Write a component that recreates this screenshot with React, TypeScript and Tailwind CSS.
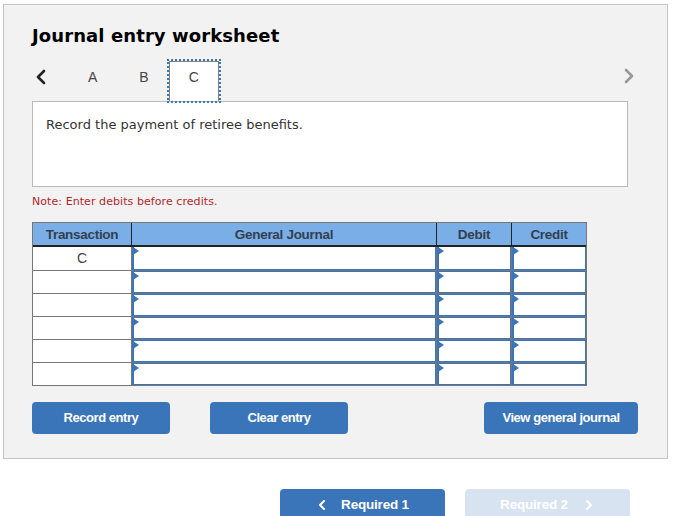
import { ChevronLeft, ChevronRight } from 'lucide-react';

const sans = 'font-["DejaVu_Sans",sans-serif]';
const arial = 'font-["Liberation_Sans",Arial,sans-serif]';

function InputCell({ index, last }: { index: number; last?: boolean }) {
  return (
    <div className={`h-[23px] border-[#777] ${index > 0 ? 'border-t' : ''} ${last ? '' : 'border-r'}`}>
      <div className={`relative h-full bg-white border-b border-r border-l-2 border-[#3a75b9] ${index > 0 ? 'border-t' : ''}`}>
        <span className="absolute -left-[1px] top-0 border-y-[4px] border-l-[6px] border-y-transparent border-l-[#3a75b9]" />
      </div>
    </div>
  );
}

function Row({ label, index }: { label?: string; index: number }) {
  return (
    <>
      <div className={`h-[23px] bg-white pt-[1px] text-center text-[14px] leading-[21px] text-[#444] border-r border-[#777] ${index > 0 ? 'border-t' : ''}`}>
        {label}
      </div>
      <InputCell index={index} />
      <InputCell index={index} />
      <InputCell index={index} last />
    </>
  );
}

function ActionButton({ label, width }: { label: string; width: string }) {
  return (
    <button className={`${width} h-8 rounded-sm bg-[#3a75b9] text-[13px] font-bold tracking-[-0.45px] text-white`}>
      {label}
    </button>
  );
}

export default function App() {
  const rows = ['C', '', '', '', '', ''];
  return (
    <div className={`h-[516px] w-[690px] overflow-hidden bg-white pt-1 pl-[3px] ${arial}`}>
      <div className="h-[455px] w-[665px] border border-[#c4c4c4] bg-[#f2f2f2] pl-[28px] pt-[19px]">
        <h1 className={`${sans} text-[18px] font-bold leading-6 tracking-[0.1px] text-black`}>Journal entry worksheet</h1>

        {/* tabs */}
        <div className="relative mt-[12px] flex h-[43px] w-[596px] items-start">
          <ChevronLeft className="mt-[5px] -ml-[3px] h-6 w-6 text-[#222]" strokeWidth={2.6} />
          <span className="ml-[35px] mt-[9px] text-[14px] leading-4 text-[#444]">A</span>
          <span className="ml-[42px] mt-[9px] text-[14px] leading-4 text-[#444]">B</span>
          <div className="relative z-10 -mt-[1px] ml-[18px] h-[44px] w-[54px] border-2 border-dotted border-[#3a75b9]">
            <div className="h-full border border-b-0 border-[#808080] bg-white pt-[7px] text-center text-[14px] leading-4 text-[#444]">
              C
            </div>
          </div>
          <ChevronRight className="absolute right-[-13px] top-[4px] h-6 w-6 text-[#999]" strokeWidth={2.6} />
        </div>

        <div className={`-mt-[2px] h-[86px] w-[596px] border border-[#b9b9b9] bg-white pl-[13px] pt-[14px] ${sans} text-[13px] leading-[18px] text-[#333]`}>
          Record the payment of retiree benefits.
        </div>

        <p className={`mt-[6px] ${sans} text-[11px] leading-[18px] tracking-[0.07px] text-[#b5262b]`}>Note: Enter debits before credits.</p>

        {/* journal table */}
        <div className="mt-[11px] grid w-[555px] grid-cols-[99px_305px_75px_74px] border border-[#777]">
          {['Transaction', 'General Journal', 'Debit', 'Credit'].map((h, i) => (
            <div
              key={h}
              className={`h-[24px] bg-[#7aaee6] pt-[1px] text-center text-[13.5px] font-bold leading-[21px] tracking-[-0.3px] text-[#33404f] border-b-2 border-[#222] ${i < 3 ? 'border-r' : ''}`}
            >
              {h}
            </div>
          ))}
          {rows.map((r, i) => (
            <Row key={i} index={i} label={r} />
          ))}
        </div>

        <div className="mt-4 flex w-[606px] items-center">
          <ActionButton label="Record entry" width="w-[138px]" />
          <div className="w-10" />
          <ActionButton label="Clear entry" width="w-[138px]" />
          <ActionButton label="View general journal" width="ml-auto w-[154px]" />
        </div>
      </div>

      <div className="ml-[277px] mt-[30px] flex gap-5">
        <button className="flex h-8 w-[165px] items-center justify-center gap-[11px] rounded-t-sm bg-[#3a75b9] pr-[2px] text-[13.5px] font-bold tracking-[-0.2px] text-white">
          <ChevronLeft className="h-4 w-4" strokeWidth={3} />
          Required 1
        </button>
        <button className="flex h-8 w-[165px] items-center justify-center gap-[13px] rounded-t-sm bg-[#d8e3f1] pl-[2px] text-[13.5px] font-bold tracking-[-0.2px] text-white">
          Required 2
          <ChevronRight className="h-4 w-4" strokeWidth={3} />
        </button>
      </div>
    </div>
  );
}
